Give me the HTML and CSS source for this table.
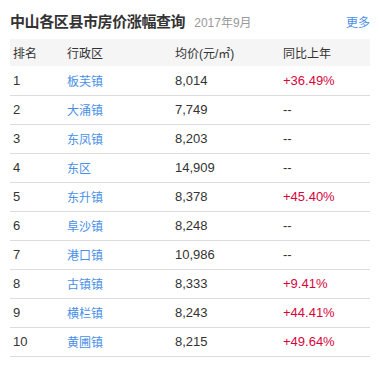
FILE: index.html
```html
<!DOCTYPE html>
<html lang="zh-CN">
<head>
<meta charset="utf-8">
<title>中山各区县市房价涨幅查询</title>
<link rel="stylesheet" href="styles.css">
</head>
<body>
<div class="box">
  <div class="head">
    <h2 class="title">中山各区县市房价涨幅查询</h2>
    <span class="date">2017年9月</span>
    <a class="more" href="#">更多</a>
  </div>
  <table class="tbl">
    <colgroup>
      <col class="c1"><col class="c2"><col class="c3"><col class="c4">
    </colgroup>
    <thead>
      <tr><th>排名</th><th>行政区</th><th>均价(元/㎡)</th><th>同比上年</th></tr>
    </thead>
    <tbody>
      <tr><td class="num">1</td><td><a href="#">板芙镇</a></td><td class="num">8,014</td><td class="num up">+36.49%</td></tr>
      <tr><td class="num">2</td><td><a href="#">大涌镇</a></td><td class="num">7,749</td><td class="num">--</td></tr>
      <tr><td class="num">3</td><td><a href="#">东凤镇</a></td><td class="num">8,203</td><td class="num">--</td></tr>
      <tr><td class="num">4</td><td><a href="#">东区</a></td><td class="num">14,909</td><td class="num">--</td></tr>
      <tr><td class="num">5</td><td><a href="#">东升镇</a></td><td class="num">8,378</td><td class="num up">+45.40%</td></tr>
      <tr><td class="num">6</td><td><a href="#">阜沙镇</a></td><td class="num">8,248</td><td class="num">--</td></tr>
      <tr><td class="num">7</td><td><a href="#">港口镇</a></td><td class="num">10,986</td><td class="num">--</td></tr>
      <tr><td class="num">8</td><td><a href="#">古镇镇</a></td><td class="num">8,333</td><td class="num up">+9.41%</td></tr>
      <tr><td class="num">9</td><td><a href="#">横栏镇</a></td><td class="num">8,243</td><td class="num up">+44.41%</td></tr>
      <tr><td class="num">10</td><td><a href="#">黄圃镇</a></td><td class="num">8,215</td><td class="num up">+49.64%</td></tr>
    </tbody>
  </table>
</div>
</body>
</html>
```
FILE: styles.css
```css
* { box-sizing: border-box; }
html, body { margin: 0; padding: 0; background: #fff; }
body {
  font-family: "Liberation Sans", "Noto Sans CJK SC", sans-serif;
  color: #333;
  font-size: 12px;
}
.box { width: 379px; padding: 0 9px 0 10px; }
.head {
  display: flex;
  align-items: baseline;
  height: 39px;
  padding-top: 10px;
}
.title {
  margin: 0;
  font-size: 15px;
  font-weight: bold;
  color: #333;
  font-family: "Noto Sans CJK SC", sans-serif;
  letter-spacing: -0.4px;
}
.date {
  margin-left: 9px;
  font-size: 12px;
  color: #999;
}
.more {
  margin-left: auto;
  font-size: 12px;
  color: #4a8fe7;
  text-decoration: none;
}
.tbl {
  width: 360px;
  border-collapse: collapse;
  table-layout: fixed;
}
.c1 { width: 54px; }
.c2 { width: 108px; }
.c3 { width: 108px; }
.c4 { width: 90px; }
.tbl th {
  background: #f5f5f5;
  height: 27px;
  padding: 0 0 0 3px;
  text-align: left;
  font-weight: normal;
  font-size: 12px;
  color: #333;
}
.tbl td {
  height: 29px;
  padding: 0 0 0 3px;
  border-bottom: 1px solid #ddd;
  font-size: 12px;
}
.tbl td.num { font-size: 13px; }
.tbl td a { color: #4a8fe7; text-decoration: none; }
.tbl td.up { color: #d6063c; }
```
